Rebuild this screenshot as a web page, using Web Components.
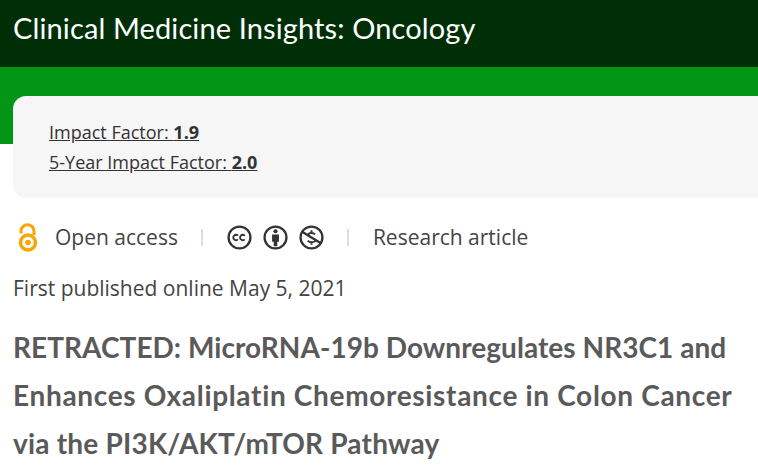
<!DOCTYPE html>
<html><head><meta charset="utf-8"><style>
html,body{margin:0;padding:0;background:#fff}
body{width:758px;height:468px;overflow:hidden;font-family:"Open Sans",sans-serif}
</style></head><body>
<journal-banner>Clinical Medicine Insights: Oncology</journal-banner>
<metric-card>
<metric-link label="Impact Factor: " value="1.9"></metric-link>
<metric-link label="5-Year Impact Factor: " value="2.0"></metric-link>
</metric-card>
<access-row></access-row>
<pub-date>First published online May 5, 2021</pub-date>
<article-title><title-line style="letter-spacing:.045px">RETRACTED: MicroRNA-19b Downregulates NR3C1 and</title-line><title-line style="letter-spacing:.67px">Enhances Oxaliplatin Chemoresistance in Colon Cancer</title-line><title-line style="letter-spacing:.2px">via the PI3K/AKT/mTOR Pathway</title-line></article-title>
<script>
function def(name,html){customElements.define(name,class extends HTMLElement{constructor(){super();this.attachShadow({mode:'open'}).innerHTML=html}})}
def('journal-banner',`<style>:host{display:block;height:67px;background:#002f07;color:#fff;box-sizing:border-box;padding:0 13px;font:400 29px/56px Lato,sans-serif;letter-spacing:.12px}</style><slot></slot>`);
def('metric-card',`<style>:host{display:block;background:linear-gradient(#029516 0 77px,#fff 77px);padding:29px 0 0 13px}
.c{background:#f6f6f6;border-radius:13px 0 0 13px;height:102px;box-sizing:border-box;padding:21px 36px;display:flex;flex-direction:column;gap:0}</style><div class="c"><slot></slot></div>`);
customElements.define('metric-link',class extends HTMLElement{constructor(){super();this.attachShadow({mode:'open'})}
connectedCallback(){this.shadowRoot.innerHTML=`<style>:host{display:block;font-size:18px;line-height:30px;color:#333}a{color:inherit;text-decoration:underline}b{font-weight:700}</style><a href="#">${this.getAttribute('label')}<b>${this.getAttribute('value')}</b></a>`}});
def('access-row',`<style>:host{display:flex;align-items:center;height:78px;box-sizing:border-box;padding-left:13px;font-size:21px;color:#444}
svg{display:block;flex:none}.s{width:2px;height:17px;background:#ddd}.cc{fill:none;stroke:#333;stroke-width:2.200}</style>
<svg width="30" height="32" viewBox="0 0 30 32"><path d="M8 12.500V10.200a6.500 6.500 0 0 1 13 0V14" fill="none" stroke="#f9a602" stroke-width="3"/><circle cx="15" cy="21.500" r="7.500" fill="none" stroke="#f9a602" stroke-width="3.500"/><circle cx="15" cy="21.500" r="2.800" fill="#f9a602"/></svg>
<span style="margin-left:12px">Open access</span><i class="s" style="margin-left:23px"></i>
<svg style="margin-left:24px" width="25" height="25" viewBox="0 0 24 24"><circle class="cc" cx="12" cy="12" r="10.500"/><path class="cc" style="stroke-width:1.800" d="M10.500 10.200a2.600 2.600 0 1 0 0 3.600M17 10.200a2.600 2.600 0 1 0 0 3.600"/></svg>
<svg style="margin-left:11px" width="25" height="25" viewBox="0 0 24 24"><circle class="cc" cx="12" cy="12" r="10.500"/><circle cx="12" cy="6" r="2" fill="#333"/><path fill="#333" d="M8.700 9h6.600v7h-1.600v4.500h-3.400V16H8.700z"/></svg>
<svg style="margin-left:11px" width="25" height="25" viewBox="0 0 24 24"><circle class="cc" cx="12" cy="12" r="10.500"/><path class="cc" d="M3 6.500 21 17.500"/><path class="cc" style="stroke-width:1.800" d="M15.500 9c-.8-.8-2.200-1.300-3.500-1.300-1.900 0-3.200.8-3.200 2 0 .6.300 1 .8 1.400M16 14.200c.1 1.400-1.600 2.300-3.700 2.300-1.600 0-3-.5-4-1.500M12 5v2.700M12 16.500V19"/></svg>
<i class="s" style="margin-left:23px"></i><span style="margin-left:24px">Research article</span>`);
def('pub-date',`<style>:host{display:block;padding-left:13px;font-size:21px;line-height:28px;color:#444;margin-top:-2px}</style><slot></slot>`);
def('article-title',`<style>:host{display:block;box-sizing:border-box;padding:21px 13px 0;font:700 28px/48px Lato,sans-serif;color:#5a5a5a}</style><slot></slot>`);
def('title-line',`<style>:host{display:block;white-space:nowrap}</style><slot></slot>`);
</script>
</body></html>
